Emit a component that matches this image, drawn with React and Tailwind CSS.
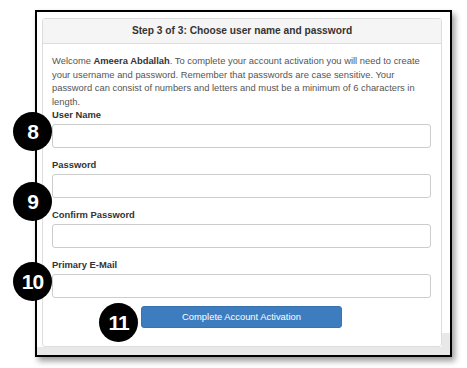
import React from "react";

const fields = ["User Name", "Password", "Confirm Password", "Primary E-Mail"];

const badges = [
  { n: "8", pos: "left-[13px] top-[112px]" },
  { n: "9", pos: "left-[13px] top-[182px]" },
  { n: "10", pos: "left-[13px] top-[262px]" },
  { n: "11", pos: "left-[99px] top-[303px]" },
];

function Badge({ n, pos }) {
  return (
    <div
      className={`absolute ${pos} flex h-[39px] w-[39px] items-center justify-center rounded-full bg-black text-[21px] font-bold leading-none tracking-[-1px] text-white`}
    >
      {n}
    </div>
  );
}

export default function App() {
  return (
    <div className="relative h-[368px] w-[467px] overflow-hidden bg-white pl-[35px] pt-[10px] font-['Liberation_Sans',Arial,sans-serif]">
      <div className="flex h-[347px] w-[417px] flex-col border-2 border-black bg-white shadow-[3px_4px_6px_rgba(0,0,0,0.4)]">
        <div className="flex flex-1 pl-[5px] pt-[6px]">
          {/* panel */}
          <div className="flex w-[400px] flex-col rounded-[3px] border border-[#dddddd] bg-white">
            <div className="flex h-[25px] items-center justify-center border-b border-[#dddddd] bg-[#f5f5f5] text-[10.2px] font-bold text-[#333]">
              Step 3 of 3: Choose user name and password
            </div>
            <div className="flex flex-col pl-[9px] pr-[10px] pt-[10px]">
              <p className="whitespace-nowrap text-[9.4px] leading-[13.5px] text-[#555]">
                Welcome <b className="text-[#333]">Ameera Abdallah</b>. To complete your account activation you will need to create
                <br />
                your username and password. Remember that passwords are case sensitive. Your
                <br />
                password can consist of numbers and letters and must be a minimum of 6 characters in
                <br />
                length.
              </p>
              {fields.map((f, i) => (
                <div key={f} className={`flex flex-col ${i === 0 ? "" : "mt-[10px]"}`}>
                  <label className="text-[9.4px] font-bold leading-[13px] text-[#333]">{f}</label>
                  <input
                    type={f.includes("Password") ? "password" : "text"}
                    className="mt-[3px] h-[24px] w-[379px] rounded-[3px] border border-[#cccccc] bg-white outline-none"
                  />
                </div>
              ))}
              <div className="mt-[8px] flex justify-center">
                <button className="h-[22px] w-[201px] rounded-[3px] border border-[#3a73b2] bg-[#3e7cc0] text-[9.4px] text-white">
                  Complete Account Activation
                </button>
              </div>
            </div>
          </div>
          <div className="flex w-[8px] flex-col">
            <div className="flex-1" />
            <div className="h-[14px] bg-[#e8e8e8]" />
          </div>
        </div>
        <div className="h-[8px] bg-[#e8e8e8]" />
      </div>
      {badges.map((b) => (
        <Badge key={b.n} {...b} />
      ))}
    </div>
  );
}
